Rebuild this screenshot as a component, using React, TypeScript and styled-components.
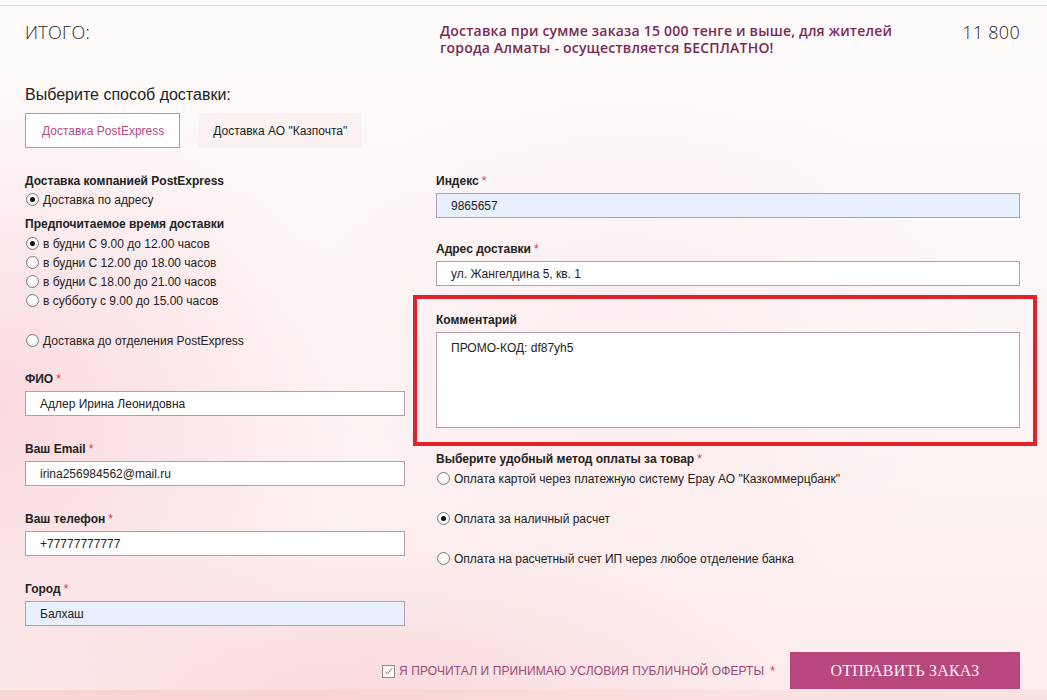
import React from 'react';
import styled, { createGlobalStyle } from 'styled-components';

const GlobalStyle = createGlobalStyle`
  html, body {
    margin: 0;
    padding: 0;
  }
  body {
    font-family: "Liberation Sans", Arial, sans-serif;
    color: #222;
    background: #fff;
  }
  * {
    box-sizing: border-box;
  }
`;

const Page = styled.div`
  width: 1047px;
  height: 700px;
  overflow: hidden;
  display: flex;
  flex-direction: column;
  background:
    radial-gradient(520px 460px at 0% 58%, rgba(247, 196, 206, 0.55), rgba(247, 196, 206, 0) 70%),
    radial-gradient(620px 260px at 35% 100%, rgba(246, 196, 200, 0.45), rgba(246, 196, 200, 0) 70%),
    radial-gradient(500px 400px at 60% 50%, rgba(250, 220, 225, 0.35), rgba(250, 220, 225, 0) 70%),
    linear-gradient(180deg, #fefbfb 0%, #fdf5f5 55%, #fcecec 100%);
`;

const TopLine = styled.div`
  height: 6px;
  border-bottom: 1px solid #dcd6d8;
  flex-shrink: 0;
`;

const Form = styled.div`
  flex: 1;
  padding: 0 27px 0 25px;
`;

const Header = styled.div`
  display: grid;
  grid-template-columns: 415px 1fr auto;
  align-items: start;
  padding-top: 15px;
`;

const Total = styled.div`
  font-family: "Open Sans", "DejaVu Sans", sans-serif;
  font-weight: 300;
  font-size: 18px;
  line-height: 22px;
  color: #262626;
  letter-spacing: 0.3px;
`;

const Promo = styled.div`
  font-family: "Open Sans", "DejaVu Sans", sans-serif;
  font-weight: 600;
  font-size: 14px;
  line-height: 17px;
  color: #7a2a54;
  padding-top: 1px;
  letter-spacing: 0.2px;
`;

const Amount = styled(Total)`
  text-align: right;
`;

const SectionTitle = styled.div`
  font-size: 16px;
  line-height: 20px;
  margin-top: 29px;
  color: #222;
`;

const Tabs = styled.div`
  display: flex;
  gap: 18px;
  margin-top: 8px;
`;

const Tab = styled.div<{ $active?: boolean }>`
  height: 35px;
  display: flex;
  align-items: center;
  padding: ${p => (p.$active ? '0 15px 0 16px' : '0 14px')};
  font-size: 12px;
  background: ${p => (p.$active ? '#fff' : '#f9f2f0')};
  border: 1px solid ${p => (p.$active ? '#b796b3' : 'transparent')};
  color: ${p => (p.$active ? '#b5497f' : '#222')};
`;

const Columns = styled.div`
  display: flex;
  gap: 31px;
  margin-top: 26px;
`;

const Column = styled.div<{ $width: number }>`
  width: ${p => p.$width}px;
  flex-shrink: 0;
  display: flex;
  flex-direction: column;
`;

const GroupTitle = styled.div<{ $top?: number }>`
  font-size: 12px;
  font-weight: bold;
  line-height: 15px;
  margin-top: ${p => p.$top ?? 0}px;
`;

const RadioGroup = styled.div`
  display: flex;
  flex-direction: column;
  margin-top: 2px;
`;

const RadioRow = styled.label<{ $top?: number }>`
  display: flex;
  align-items: center;
  gap: 4px;
  height: 19px;
  font-size: 12px;
  color: #222;
  margin-top: ${p => p.$top ?? 0}px;
`;

const RadioDot = styled.span<{ $checked?: boolean }>`
  width: 13px;
  height: 13px;
  border-radius: 50%;
  border: 1px solid #7d7d7d;
  background: radial-gradient(circle at 50% 35%, #ffffff 30%, #e6e6e6 100%);
  display: flex;
  align-items: center;
  justify-content: center;
  flex-shrink: 0;
  margin-left: 1px;

  &::after {
    content: '';
    width: 5px;
    height: 5px;
    border-radius: 50%;
    background: #111;
    display: ${p => (p.$checked ? 'block' : 'none')};
  }
`;

const Field = styled.div<{ $top?: number }>`
  display: flex;
  flex-direction: column;
  margin-top: ${p => p.$top ?? 0}px;
`;

const Label = styled.div`
  font-size: 12px;
  font-weight: bold;
  line-height: 15px;
  margin-bottom: 4px;
`;

const Star = styled.span`
  color: #d8364a;
  font-weight: normal;
  margin-left: 3px;
`;

const Input = styled.div<{ $filled?: boolean }>`
  height: 25px;
  display: flex;
  align-items: center;
  padding: 0 14px;
  font-size: 12px;
  color: #222;
  background: ${p => (p.$filled ? '#e8f0fe' : '#fff')};
  border: 1px solid #b79ab3;
`;

const TextArea = styled.div`
  height: 96px;
  padding: 8px 14px;
  font-size: 12px;
  line-height: 14px;
  background: #fff;
  border: 1px solid #b79ab3;
`;

const Highlight = styled.div`
  margin: 9px -17px 0 -23px;
  padding: 14px 13px 14px 19px;
  border: 4px solid #e3212b;
`;

const PaymentList = styled.div`
  display: flex;
  flex-direction: column;
  gap: 21px;
  margin-top: 2px;
`;

const Footer = styled.div`
  display: flex;
  justify-content: flex-end;
  align-items: center;
  gap: 15px;
  margin-top: 26px;
`;

const Agree = styled.label`
  display: flex;
  align-items: center;
  gap: 4px;
  font-size: 12px;
  color: #9a4a78;
  text-transform: uppercase;
  letter-spacing: 0.1px;
`;

const AgreeStar = styled.span`
  color: #d8364a;
  margin-left: 2px;
`;

const CheckBox = styled.span`
  width: 13px;
  height: 13px;
  border: 1px solid #8c8c8c;
  background: #fff;
  display: flex;
  align-items: center;
  justify-content: center;
  margin-top: 2px;
`;

const SubmitButton = styled.button`
  width: 230px;
  height: 37px;
  border: none;
  background: #b8477b;
  color: #f9edf3;
  font-family: "Liberation Serif", "Times New Roman", serif;
  font-size: 16px;
  letter-spacing: 0.2px;
  cursor: pointer;
`;

const BottomStrip = styled.div`
  height: 10px;
  flex-shrink: 0;
  background: linear-gradient(90deg, #f7d6d6 0%, #f9d3d2 30%, #fbe1df 70%, #fae2e0 100%);
`;

const timeOptions = [
  { text: 'в будни С 9.00 до 12.00 часов', checked: true },
  { text: 'в будни С 12.00 до 18.00 часов' },
  { text: 'в будни С 18.00 до 21.00 часов' },
  { text: 'в субботу с 9.00 до 15.00 часов' },
];

const paymentOptions = [
  { text: 'Оплата картой через платежную систему Epay АО "Казкоммерцбанк"' },
  { text: 'Оплата за наличный расчет', checked: true },
  { text: 'Оплата на расчетный счет ИП через любое отделение банка' },
];

const App: React.FC = () => {
  return (
    <Page>
      <GlobalStyle />
      <TopLine />
      <Form>
        <Header>
          <Total>ИТОГО:</Total>
          <Promo>
            Доставка при сумме заказа 15 000 тенге и выше, для жителей
            <br />
            города Алматы - осуществляется БЕСПЛАТНО!
          </Promo>
          <Amount>11 800</Amount>
        </Header>

        <SectionTitle>Выберите способ доставки:</SectionTitle>
        <Tabs>
          <Tab $active>Доставка PostExpress</Tab>
          <Tab>Доставка АО "Казпочта"</Tab>
        </Tabs>

        <Columns>
          <Column $width={380}>
            <GroupTitle>Доставка компанией PostExpress</GroupTitle>
            <RadioRow $top={1}>
              <RadioDot $checked />
              Доставка по адресу
            </RadioRow>
            <GroupTitle $top={8}>Предпочитаемое время доставки</GroupTitle>
            <RadioGroup>
              {timeOptions.map(o => (
                <RadioRow key={o.text}>
                  <RadioDot $checked={o.checked} />
                  {o.text}
                </RadioRow>
              ))}
            </RadioGroup>
            <RadioRow $top={21}>
              <RadioDot />
              Доставка до отделения PostExpress
            </RadioRow>

            <Field $top={22}>
              <Label>ФИО<Star>*</Star></Label>
              <Input>Адлер Ирина Леонидовна</Input>
            </Field>
            <Field $top={26}>
              <Label>Ваш Email<Star>*</Star></Label>
              <Input>irina256984562@mail.ru</Input>
            </Field>
            <Field $top={26}>
              <Label>Ваш телефон<Star>*</Star></Label>
              <Input>+77777777777</Input>
            </Field>
            <Field $top={26}>
              <Label>Город<Star>*</Star></Label>
              <Input $filled>Балхаш</Input>
            </Field>
          </Column>

          <Column $width={584}>
            <Field>
              <Label>Индекс<Star>*</Star></Label>
              <Input $filled>9865657</Input>
            </Field>
            <Field $top={24}>
              <Label>Адрес доставки<Star>*</Star></Label>
              <Input>ул. Жангелдина 5, кв. 1</Input>
            </Field>
            <Highlight>
              <Label>Комментарий</Label>
              <TextArea>ПРОМО-КОД: df87yh5</TextArea>
            </Highlight>
            <GroupTitle $top={6}>
              Выберите удобный метод оплаты за товар<Star>*</Star>
            </GroupTitle>
            <PaymentList>
              {paymentOptions.map(o => (
                <RadioRow key={o.text}>
                  <RadioDot $checked={o.checked} />
                  {o.text}
                </RadioRow>
              ))}
            </PaymentList>
          </Column>
        </Columns>

        <Footer>
          <Agree>
            <CheckBox>
              <svg width="9" height="9" viewBox="0 0 9 9" fill="none" stroke="#7a7a7a" strokeWidth="1">
                <polyline points="1.5,4.8 3.5,7 7.8,1.5" />
              </svg>
            </CheckBox>
            Я прочитал и принимаю условия публичной оферты<AgreeStar>*</AgreeStar>
          </Agree>
          <SubmitButton>ОТПРАВИТЬ ЗАКАЗ</SubmitButton>
        </Footer>
      </Form>
      <BottomStrip />
    </Page>
  );
};

export default App;
